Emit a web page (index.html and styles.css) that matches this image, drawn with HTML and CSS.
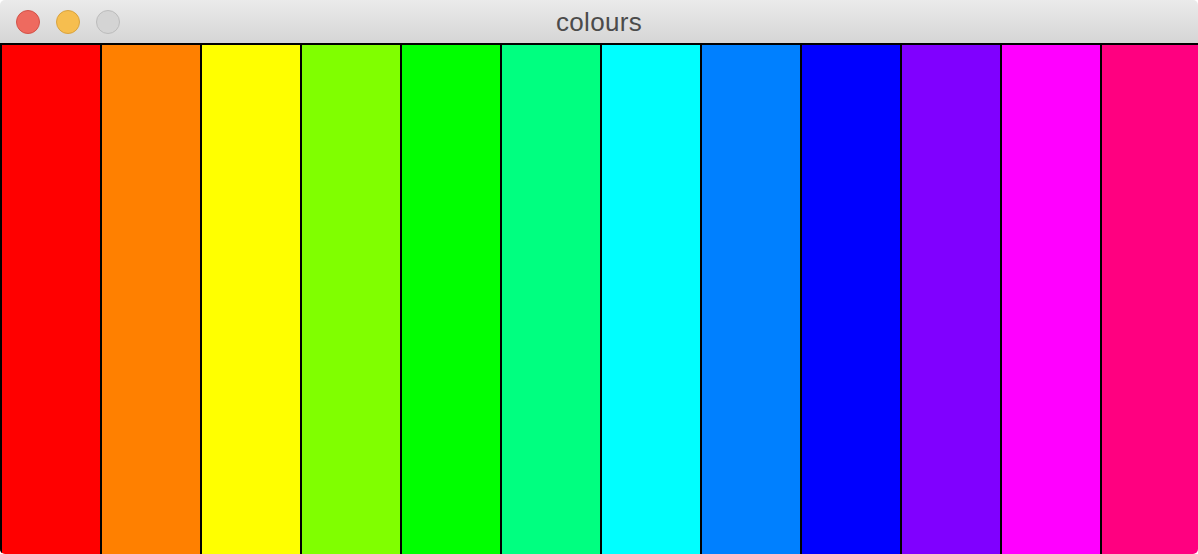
FILE: index.html
```html
<!DOCTYPE html>
<html>
<head>
<meta charset="utf-8">
<title>colours</title>
<link rel="stylesheet" href="styles.css">
</head>
<body>
<div class="window">
  <div class="titlebar">
    <div class="lights">
      <span class="light close"></span>
      <span class="light min"></span>
      <span class="light max"></span>
    </div>
    <div class="title">colours</div>
  </div>
  <div class="stripes">
    <div class="stripe c1"></div>
    <div class="stripe c2"></div>
    <div class="stripe c3"></div>
    <div class="stripe c4"></div>
    <div class="stripe c5"></div>
    <div class="stripe c6"></div>
    <div class="stripe c7"></div>
    <div class="stripe c8"></div>
    <div class="stripe c9"></div>
    <div class="stripe c10"></div>
    <div class="stripe c11"></div>
    <div class="stripe c12"></div>
  </div>
</div>
</body>
</html>
```
FILE: styles.css
```css
html, body {
  margin: 0;
  padding: 0;
  background: #ffffff;
  width: 1198px;
  height: 554px;
  overflow: hidden;
}
.window {
  width: 1198px;
  height: 554px;
  border-radius: 5px;
  overflow: hidden;
  display: flex;
  flex-direction: column;
}
.titlebar {
  position: relative;
  height: 43px;
  flex: 0 0 43px;
  background: linear-gradient(#ebebeb, #d5d5d5);
  border-bottom: 2px solid #000;
  display: flex;
  align-items: center;
  justify-content: center;
}
.lights {
  position: absolute;
  left: 16px;
  top: 10px;
  display: flex;
  gap: 16px;
}
.light {
  width: 22px;
  height: 22px;
  border-radius: 50%;
  display: block;
}
.close { background: #ee6a5f; border: 1px solid #d35248; }
.min { background: #f6be4f; border: 1px solid #d9a33f; }
.max { background: #d4d4d4; border: 1px solid #bcbcbc; }
.title {
  font-family: "Liberation Sans", Arial, sans-serif;
  font-size: 26px;
  color: #4b4b4b;
  margin-top: 1px;
  letter-spacing: 0.3px;
}
.stripes {
  flex: 1;
  display: flex;
}
.stripe {
  width: 98px;
  flex: 0 0 98px;
  border-left: 2px solid #000;
}
.stripe.c12 { flex: 1; }
.c1 { background: #ff0000; }
.c2 { background: #ff8000; }
.c3 { background: #ffff00; }
.c4 { background: #80ff00; }
.c5 { background: #00ff00; }
.c6 { background: #00ff80; }
.c7 { background: #00ffff; }
.c8 { background: #0080ff; }
.c9 { background: #0000ff; }
.c10 { background: #8000ff; }
.c11 { background: #ff00ff; }
.c12 { background: #ff0080; }
```
